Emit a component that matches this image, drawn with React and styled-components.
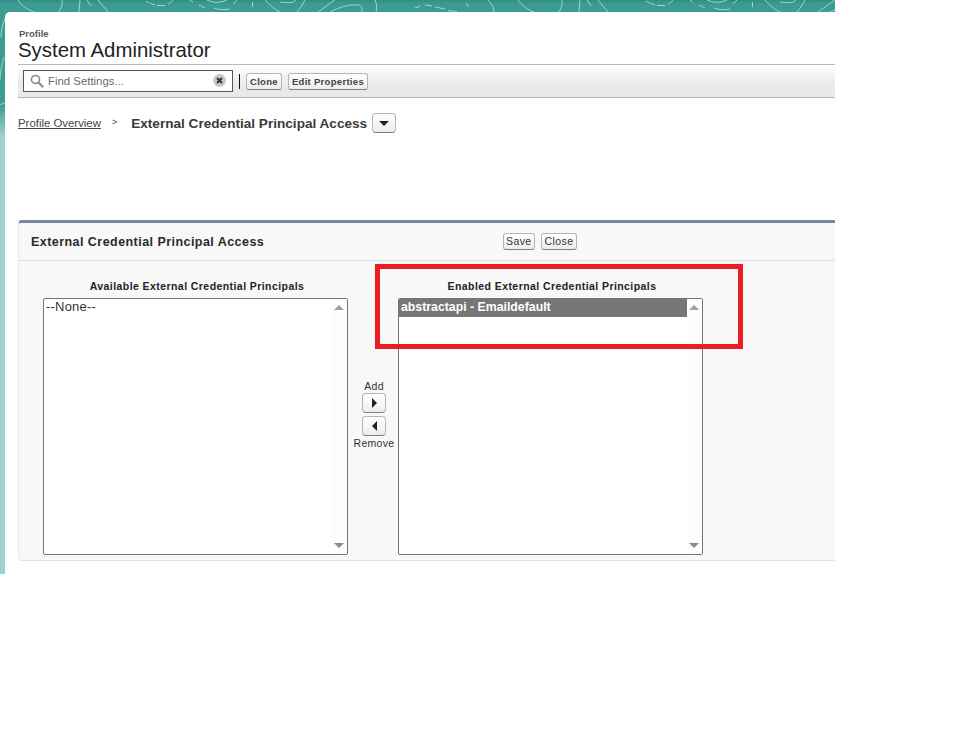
import React from "react";
import styled, { createGlobalStyle } from "styled-components";

const Global = createGlobalStyle`
  html, body { margin: 0; padding: 0; background: #fff; }
  body { font-family: "Liberation Sans", Arial, sans-serif; color: #222; }
`;

const Stage = styled.div`
  position: relative;
  width: 835px;
  height: 574px;
  padding: 12px 0 0 5px;
  box-sizing: border-box;
  overflow: hidden;
  background: linear-gradient(180deg, #3b9c91 0, #3b9c91 104px, #9fd1cd 136px, #9fd1cd 100%);
`;

const Pattern = styled.svg`
  position: absolute;
  left: 0;
  top: 0;
  width: 835px;
  height: 130px;
`;

const Page = styled.main`
  position: relative;
  height: 100%;
  background: #fff;
  border-top-left-radius: 5px;
  padding-left: 13px;
  box-sizing: border-box;
`;

const Header = styled.header`
  padding: 17px 0 0 1px;
  height: 35px;
`;

const Eyebrow = styled.div`
  font-size: 9.5px;
  line-height: 10px;
  font-weight: 700;
  color: #5a5a5a;
`;

const Title = styled.h1`
  margin: 0 0 0 -1px;
  font-size: 20.4px;
  line-height: 22px;
  font-weight: 400;
  color: #222;
`;

const Toolbar = styled.div`
  height: 34px;
  box-sizing: border-box;
  border-top: 1px solid #b9b9b9;
  border-bottom: 1px solid #b9b9b9;
  background: linear-gradient(180deg, #fff 0, #eaeaea 60%, #e9e9e9 100%);
  display: flex;
  align-items: center;
  padding: 0 0 1px 5px;
`;

const Search = styled.div`
  width: 210px;
  height: 22px;
  box-sizing: border-box;
  border: 1px solid #555;
  background: #fff;
  display: flex;
  align-items: center;
  padding: 0 6px;
  gap: 4px;
`;

const Placeholder = styled.span`
  flex: 1;
  font-size: 11.4px;
  color: #6b6b6b;
`;

const Divider = styled.span`
  width: 1px;
  height: 15px;
  background: #111;
  margin: 2px 6px 0 6px;
`;

const Button = styled.button`
  box-sizing: border-box;
  height: 17px;
  padding: 0 3px;
  margin: 2px 6px 0 0;
  border: 1px solid #b5b5b5;
  border-bottom-color: #7f7f7f;
  border-radius: 3px;
  background: linear-gradient(180deg, #fff, #ededed);
  font: 700 9.5px "Liberation Sans", Arial, sans-serif;
  letter-spacing: 0.3px;
  color: #444;
  white-space: nowrap;
`;

const CardButton = styled(Button)`
  margin: 0 6px 0 0;
  padding: 0 ${p => p.$pad}px;
  font-weight: 400;
  font-size: 10.5px;
  letter-spacing: 0.4px;
  color: #333;
`;

const Breadcrumb = styled.nav`
  display: flex;
  align-items: center;
  height: 20px;
  margin-top: 15px;
`;

const CrumbLink = styled.a`
  font-size: 11.4px;
  color: #444;
  text-decoration: underline;
`;

const CrumbSep = styled.span`
  font-size: 9px;
  color: #444;
  margin: -2px 14px 0 11px;
`;

const CrumbCurrent = styled.span`
  font-size: 13.6px;
  font-weight: 700;
  color: #3a3a3a;
  margin-right: 5px;
`;

const IconButton = styled.button`
  box-sizing: border-box;
  width: 24px;
  height: 20px;
  padding: 0;
  display: flex;
  align-items: center;
  justify-content: center;
  border: 1px solid #b5b5b5;
  border-bottom-color: #7f7f7f;
  border-radius: 4px;
  background: linear-gradient(180deg, #fff, #ededed);
`;

const Card = styled.section`
  margin-top: 87px;
  height: 341px;
  box-sizing: border-box;
  background: #f8f8f8;
  border-top: 3px solid #7a86a3;
  border-left: 1px solid #e8e8e8;
  border-bottom: 1px solid #e4e4e4;
  border-top-left-radius: 4px;
  border-bottom-left-radius: 4px;
`;

const CardHeader = styled.div`
  display: grid;
  grid-template-columns: 472px auto auto 1fr;
  align-items: center;
  height: 38px;
  box-sizing: border-box;
  border-bottom: 1px solid #dcdcdc;
  padding: 0 0 1px 12px;
`;

const CardTitle = styled.h2`
  margin: 2px 0 0;
  font-size: 12.5px;
  font-weight: 700;
  letter-spacing: 0.45px;
  color: #2a2a2a;
`;

const CardBody = styled.div`
  position: relative;
  display: flex;
  align-items: flex-start;
  padding: 18px 0 0 24px;
`;

const Column = styled.div`
  width: 305px;
  display: flex;
  flex-direction: column;
  align-items: center;
`;

const ColumnLabel = styled.div`
  font-size: 10.5px;
  line-height: 14px;
  font-weight: 700;
  letter-spacing: 0.43px;
  color: #222;
  margin: 0 0 5px 3px;
`;

const ListBox = styled.div`
  width: 305px;
  height: 257px;
  box-sizing: border-box;
  border: 1px solid #767676;
  border-radius: 2px;
  background: #fff;
  position: relative;
  overflow: hidden;
`;

const Option = styled.div`
  width: 289px;
  height: 18px;
  box-sizing: border-box;
  padding-left: 2px;
  font-size: ${p => (p.$selected ? 12.3 : 13)}px;
  font-weight: ${p => (p.$selected ? 700 : 400)};
  line-height: 16px;
  letter-spacing: ${p => (p.$selected ? 0 : 0.2)}px;
  background: ${p => (p.$selected ? "#767676" : "transparent")};
  color: ${p => (p.$selected ? "#fff" : "#333")};
`;

const ScrollTrack = styled.div`
  position: absolute;
  top: 0;
  right: 0;
  bottom: 0;
  width: 15px;
  background: #fdfdfd;
`;

const Arrow = styled.span`
  position: absolute;
  right: 3px;
  ${p => (p.$down ? "bottom: 6px;" : "top: 6px;")}
  width: 0;
  height: 0;
  border-left: 5px solid transparent;
  border-right: 5px solid transparent;
  ${p => (p.$down ? "border-top: 5px solid #8c8c8c;" : "border-bottom: 5px solid #a0a0a0;")}
`;

const Mover = styled.div`
  width: 50px;
  height: 257px;
  margin-top: 19px;
  padding: 82px 0 0 2px;
  display: flex;
  flex-direction: column;
  align-items: center;
  box-sizing: border-box;
  font-size: 10.5px;
  letter-spacing: 0.3px;
  color: #333;
  gap: 1px;
`;

const MoverButtons = styled.div`
  display: flex;
  flex-direction: column;
  gap: 3px;
`;

const MoverLabel = styled.span`
  line-height: 12px;
  white-space: nowrap;
`;

const Highlight = styled.div`
  position: absolute;
  left: 356px;
  top: 3px;
  width: 368px;
  height: 85px;
  box-sizing: border-box;
  border: 5px solid #ed1c24;
  pointer-events: none;
`;

const tilePaths = [
  "M18 0C22 6 28 10 34 12",
  "M62 0C63 4 61 8 59 12",
  "M80 0C80 4 79 8 79 12",
  "M87 0L91 6",
  "M98 0C101 4 105 8 108 12",
  "M146 1C149 3 152 4 155 5",
  "M157 5.5L165 5.5",
  "M168 4C171 3 172 1 173 0",
  "M190 0L193 2",
  "M199 5L205 8",
  "M207 0C214 3 220 3 227 0",
  "M214 8C219 10 225 10 230 9",
  "M233 4L237 0",
  "M252.5 2L252.5 7",
  "M265 0C270 5 275 10 280 12",
  "M280 2C288 3 294 3 296 0",
  "M305 0C302 5 300 9 297 12",
  "M318 12C324 8 330 3 335 0",
  "M330 12C340 7 350 4 358 5C362 5 362 9 362 12",
  "M375 0C377 4 377 8 376 12",
  "M415 8L420 6",
  "M425 5L432 6",
  "M435 7L445 9",
  "M448 10.5L457 11.5",
  "M466 3L469 7",
  "M488 0C492 4 494 8 494 12",
];

const edgePaths = [
  "M5 18C3 24 1 30 1 37",
  "M4 57C2 64 0 72 0 80",
  "M0 105C2 104 4 103 5 103",
];

const PatternArt = () => (
  <Pattern viewBox="0 0 835 130" aria-hidden="true">
    <defs>
      <linearGradient id="shade" x1="0" y1="0" x2="0" y2="1">
        <stop offset="0" stopColor="#2f8c82" />
        <stop offset="1" stopColor="#3b9c91" stopOpacity="0" />
      </linearGradient>
      <g id="tile">
        {tilePaths.map(d => (
          <path key={d} d={d} />
        ))}
      </g>
    </defs>
    <rect x="0" y="0" width="835" height="5" fill="url(#shade)" />
    <g fill="none" stroke="#b4dfda" strokeWidth="1" opacity="0.85">
      <use href="#tile" />
      <use href="#tile" x="500" />
      {edgePaths.map(d => (
        <path key={d} d={d} />
      ))}
    </g>
  </Pattern>
);

const SearchIcon = () => (
  <svg width="14" height="14" viewBox="0 0 14 14" aria-hidden="true">
    <circle cx="5.5" cy="5.5" r="4" fill="none" stroke="#8a8a8a" strokeWidth="1.6" />
    <path d="M8.5 8.5L12.5 12.5" stroke="#8a8a8a" strokeWidth="2.2" strokeLinecap="round" />
  </svg>
);

const ClearIcon = () => (
  <svg width="13" height="13" viewBox="0 0 13 13" aria-hidden="true">
    <circle cx="6.5" cy="6.5" r="6.5" fill="#c6cacc" />
    <path d="M4 4L9 9M9 4L4 9" stroke="#333" strokeWidth="2" />
  </svg>
);

const Triangle = ({ points, w, h }) => (
  <svg width={w} height={h} viewBox={`0 0 ${w} ${h}`} aria-hidden="true">
    <polygon points={points} fill="#222" />
  </svg>
);

export default function App() {
  return (
    <>
      <Global />
      <Stage>
        <PatternArt />
        <Page>
          <Header>
            <Eyebrow>Profile</Eyebrow>
            <Title>System Administrator</Title>
          </Header>
          <Toolbar>
            <Search>
              <SearchIcon />
              <Placeholder>Find Settings...</Placeholder>
              <ClearIcon />
            </Search>
            <Divider />
            <Button>Clone</Button>
            <Button>Edit Properties</Button>
          </Toolbar>
          <Breadcrumb>
            <CrumbLink>Profile Overview</CrumbLink>
            <CrumbSep>&gt;</CrumbSep>
            <CrumbCurrent>External Credential Principal Access</CrumbCurrent>
            <IconButton>
              <Triangle w={10} h={5} points="0,0 10,0 5,5" />
            </IconButton>
          </Breadcrumb>
          <Card>
            <CardHeader>
              <CardTitle>External Credential Principal Access</CardTitle>
              <CardButton $pad={2}>Save</CardButton>
              <CardButton $pad={3}>Close</CardButton>
            </CardHeader>
            <CardBody>
              <Column>
                <ColumnLabel>Available External Credential Principals</ColumnLabel>
                <ListBox>
                  <Option>--None--</Option>
                  <ScrollTrack>
                    <Arrow />
                    <Arrow $down />
                  </ScrollTrack>
                </ListBox>
              </Column>
              <Mover>
                <MoverLabel>Add</MoverLabel>
                <MoverButtons>
                  <IconButton>
                    <Triangle w={5} h={10} points="0,0 5,5 0,10" />
                  </IconButton>
                  <IconButton>
                    <Triangle w={5} h={10} points="5,0 0,5 5,10" />
                  </IconButton>
                </MoverButtons>
                <MoverLabel>Remove</MoverLabel>
              </Mover>
              <Column>
                <ColumnLabel>Enabled External Credential Principals</ColumnLabel>
                <ListBox>
                  <Option $selected>abstractapi - Emaildefault</Option>
                  <ScrollTrack>
                    <Arrow />
                    <Arrow $down />
                  </ScrollTrack>
                </ListBox>
              </Column>
              <Highlight />
            </CardBody>
          </Card>
        </Page>
      </Stage>
    </>
  );
}
